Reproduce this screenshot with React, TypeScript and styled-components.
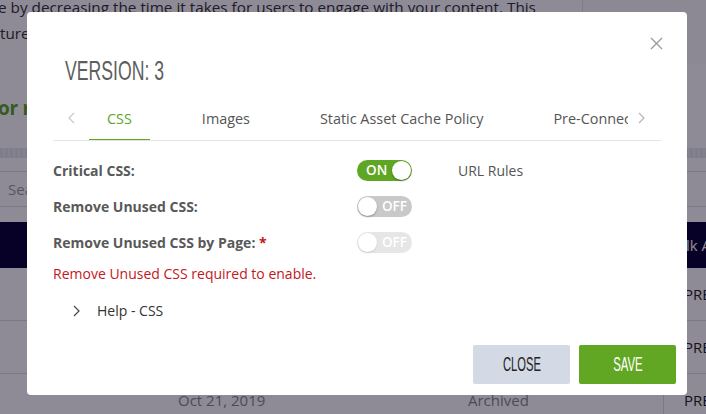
import React from 'react';
import styled, { createGlobalStyle } from 'styled-components';

const GlobalStyle = createGlobalStyle`
  html, body {
    margin: 0;
    padding: 0;
    background: #ffffff;
    font-family: 'Open Sans', 'Liberation Sans', sans-serif;
    overflow: hidden;
  }
  * {
    box-sizing: border-box;
  }
`;

// ---------- page behind the dialog ----------

const Page = styled.div`
  width: 706px;
  height: 414px;
  overflow: hidden;
  color: #333;
`;

const Intro = styled.div`
  display: flex;
  height: 70px;
  margin-top: -6px;
`;

const IntroText = styled.p`
  width: 583px;
  margin: 0;
  border-right: 1px solid #e2e2e2;
  font-size: 15.3px;
  line-height: 26px;
  color: #333;
  text-indent: -2px;
  white-space: nowrap;
  overflow: hidden;
`;

const Aside = styled.div`
  flex: 1;
  background: #fbfbfb;
`;

const Heading = styled.h2`
  margin: 30px 0 0 -2px;
  height: 34px;
  font-size: 19px;
  line-height: 28px;
  font-weight: 700;
  letter-spacing: -0.3px;
  color: #5fa624;
  white-space: nowrap;
`;

const Band = styled.div`
  height: 10px;
  margin-top: 20px;
  background: repeating-linear-gradient(90deg, #e4e4ea 0 3px, #efeff3 3px 5px);
`;

const SearchRow = styled.div`
  display: flex;
  align-items: center;
  height: 36px;
  margin-top: 13px;
  padding-left: 8px;
  border-top: 1px solid #dedede;
  border-bottom: 1px solid #dedede;
  font-size: 15px;
  color: #9a9aa4;
`;

const Grid = styled.div`
  display: grid;
  grid-template-columns: 178px 290px 195px 1fr;
  align-items: center;
`;

const TableHead = styled(Grid)`
  height: 46px;
  margin-top: 15px;
  background: #070033;
  color: #ffffff;
  font-size: 15px;
  white-space: nowrap;
`;

const HeadCell = styled.span`
  padding-left: 4px;
  overflow: hidden;
`;

const TableRow = styled(Grid)`
  height: 53px;
  border-bottom: 1px solid #dcdcdc;
  font-size: 15px;
  color: #8a8a8a;
`;

const ActionCell = styled.div`
  height: 100%;
  display: flex;
  align-items: center;
  padding-left: 20px;
  border-left: 1px solid #dcdcdc;
  color: #222;
  white-space: nowrap;
`;

// ---------- dialog ----------

const Overlay = styled.div`
  position: fixed;
  inset: 0;
  display: flex;
  align-items: flex-start;
  padding: 12px 0 0 27px;
  background: rgba(9, 3, 27, 0.46);
`;

const Modal = styled.div`
  position: relative;
  width: 660px;
  height: 383px;
  display: flex;
  flex-direction: column;
  padding: 0 11px 11px 26px;
  background: #ffffff;
  border-radius: 4px;
`;

const CloseIcon = styled.button`
  position: absolute;
  top: 23px;
  right: 23px;
  width: 16px;
  height: 16px;
  padding: 0;
  border: 0;
  background: none;
  display: flex;
  align-items: center;
  justify-content: center;
  cursor: pointer;
`;

const Condensed = styled.span<{ $scale: number; $origin?: string }>`
  display: inline-block;
  font-family: 'Liberation Sans Narrow', 'Liberation Sans', sans-serif;
  transform: scaleX(${({ $scale }) => $scale});
  transform-origin: ${({ $origin }) => $origin || 'center'};
`;

const Title = styled.h1`
  margin: 41px 0 0 12px;
  height: 32px;
  font-size: 28px;
  line-height: 32px;
  font-weight: 400;
  color: #5e5e5e;
  white-space: nowrap;
`;

const TabBar = styled.div`
  display: flex;
  align-items: stretch;
  height: 44px;
  margin-top: 12px;
  margin-right: 15px;
  border-bottom: 1px solid #e4e4e4;
`;

const TabArrow = styled.div<{ $side: 'left' | 'right' }>`
  width: ${({ $side }) => ($side === 'left' ? '36px' : '33px')};
  display: flex;
  align-items: center;
  justify-content: ${({ $side }) => ($side === 'left' ? 'center' : 'flex-start')};
  padding-left: ${({ $side }) => ($side === 'left' ? '0' : '10px')};
  padding-bottom: 2px;
`;

const TabList = styled.div`
  flex: 1;
  display: flex;
  gap: 34px;
  overflow: hidden;
`;

const Tab = styled.div<{ $active?: boolean }>`
  flex-shrink: 0;
  display: flex;
  align-items: center;
  padding: 0 18px;
  margin-bottom: -1px;
  border-bottom: 2px solid ${({ $active }) => ($active ? '#5fa624' : 'transparent')};
  font-size: 14.4px;
  color: ${({ $active }) => ($active ? '#5fa624' : '#555555')};
  white-space: nowrap;
`;

const Form = styled.div`
  padding-top: 11px;
`;

const Row = styled.div`
  display: flex;
  align-items: center;
  height: 36px;
`;

const Label = styled.div`
  width: 304px;
  font-size: 14px;
  font-weight: 700;
  color: #595959;
`;

const Required = styled.span`
  color: #c4161c;
`;

const Switch = styled.span<{ $on?: boolean; $disabled?: boolean }>`
  position: relative;
  display: inline-flex;
  align-items: center;
  justify-content: ${({ $on }) => ($on ? 'flex-start' : 'flex-end')};
  width: 55px;
  height: 21px;
  padding: ${({ $on }) => ($on ? '0 0 0 9px' : '0 5px 0 0')};
  border-radius: 11px;
  background: ${({ $on }) => ($on ? '#5fa624' : '#c9c9c9')};
  opacity: ${({ $disabled }) => ($disabled ? 0.45 : 1)};
  color: #ffffff;
  font-size: 13.5px;
  font-weight: 600;
  line-height: 21px;
`;

const Knob = styled.span<{ $on?: boolean }>`
  position: absolute;
  top: 1px;
  ${({ $on }) => ($on ? 'right: 1px;' : 'left: 1px;')}
  width: 19px;
  height: 19px;
  border-radius: 50%;
  background: #ffffff;
  box-shadow: 0 1px 2px rgba(0, 0, 0, 0.3);
`;

const RuleLink = styled.span`
  margin-left: 46px;
  font-size: 14px;
  color: #555555;
`;

const Notice = styled.div`
  margin-top: 4px;
  font-size: 14px;
  line-height: 20px;
  color: #c4161c;
`;

const Help = styled.div`
  display: flex;
  align-items: center;
  gap: 17px;
  margin-top: 17px;
  padding-left: 20px;
  font-size: 14px;
  line-height: 20px;
  color: #333333;
`;

const Footer = styled.div`
  margin-top: auto;
  display: flex;
  justify-content: flex-end;
  gap: 9px;
`;

const Button = styled.button<{ $primary?: boolean }>`
  width: 97px;
  height: 39px;
  border: 0;
  border-radius: 2px;
  background: ${({ $primary }) => ($primary ? '#62a723' : '#d3d9e5')};
  color: ${({ $primary }) => ($primary ? '#ffffff' : '#222222')};
  font-size: 20px;
  padding: 0;
  cursor: pointer;
`;

const Chevron = ({ dir, color }: { dir: 'left' | 'right'; color: string }) => (
  <svg width="7" height="12" viewBox="0 0 7 12" fill="none">
    <polyline
      points={dir === 'left' ? '6,1 1,6 6,11' : '1,1 6,6 1,11'}
      stroke={color}
      strokeWidth="1.2"
    />
  </svg>
);

const tabs = ['CSS', 'Images', 'Static Asset Cache Policy', 'Pre-Connect', 'Fonts'];

const rows = ['Oct 24, 2019', 'Oct 22, 2019', 'Oct 21, 2019'];

const App = () => (
  <>
    <GlobalStyle />
    <Page>
      <Intro>
        <IntroText>
          e by decreasing the time it takes for users to engage with your content. This
          <br />
          ture helps improve page speed for every visitor.
        </IntroText>
        <Aside />
      </Intro>
      <Heading>or real visitors</Heading>
      <Band />
      <SearchRow>Search</SearchRow>
      <TableHead>
        <span />
        <span />
        <span />
        <HeadCell>Bulk Actions</HeadCell>
      </TableHead>
      {rows.map((date) => (
        <TableRow key={date}>
          <span />
          <span>{date}</span>
          <span>Archived</span>
          <ActionCell>PREVIEW</ActionCell>
        </TableRow>
      ))}
    </Page>

    <Overlay>
      <Modal>
        <CloseIcon aria-label="Close">
          <svg width="13" height="13" viewBox="0 0 13 13">
            <path d="M1 1 L12 12 M12 1 L1 12" stroke="#9a9a9a" strokeWidth="1.3" />
          </svg>
        </CloseIcon>

        <Title>
          <Condensed $scale={0.63} $origin="left">VERSION: 3</Condensed>
        </Title>

        <TabBar>
          <TabArrow $side="left">
            <Chevron dir="left" color="#c8c8c8" />
          </TabArrow>
          <TabList>
            {tabs.map((t, i) => (
              <Tab key={t} $active={i === 0}>{t}</Tab>
            ))}
          </TabList>
          <TabArrow $side="right">
            <Chevron dir="right" color="#b5b5b5" />
          </TabArrow>
        </TabBar>

        <Form>
          <Row>
            <Label>Critical CSS:</Label>
            <Switch $on>
              ON
              <Knob $on />
            </Switch>
            <RuleLink>URL Rules</RuleLink>
          </Row>
          <Row>
            <Label>Remove Unused CSS:</Label>
            <Switch>
              <Knob />
              OFF
            </Switch>
          </Row>
          <Row>
            <Label>
              Remove Unused CSS by Page: <Required>*</Required>
            </Label>
            <Switch $disabled>
              <Knob />
              OFF
            </Switch>
          </Row>
          <Notice>Remove Unused CSS required to enable.</Notice>
          <Help>
            <Chevron dir="right" color="#444444" />
            Help - CSS
          </Help>
        </Form>

        <Footer>
          <Button>
            <Condensed $scale={0.56}>CLOSE</Condensed>
          </Button>
          <Button $primary>
            <Condensed $scale={0.57}>SAVE</Condensed>
          </Button>
        </Footer>
      </Modal>
    </Overlay>
  </>
);

export default App;
